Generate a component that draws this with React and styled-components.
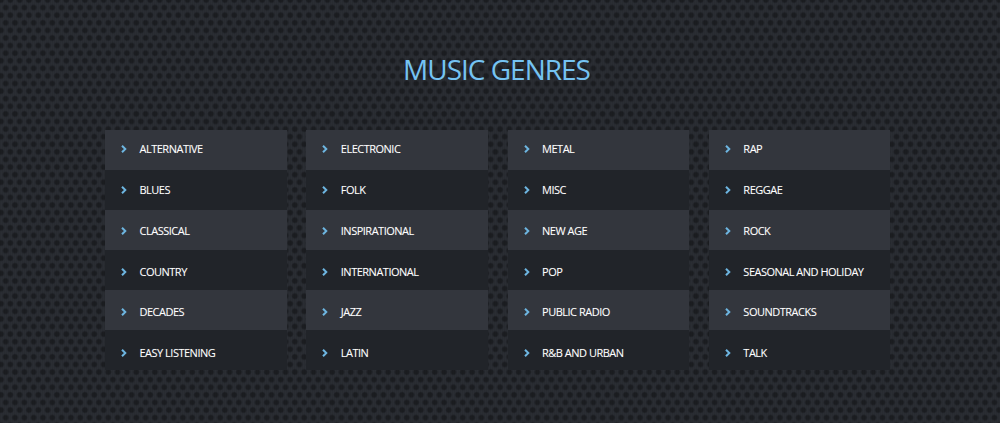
import React from 'react';
import styled, { createGlobalStyle } from 'styled-components';

const GlobalStyle = createGlobalStyle`
  html, body {
    margin: 0;
    padding: 0;
  }
  body {
    background-color: #24272d;
    font-family: "Open Sans", "Liberation Sans", sans-serif;
  }
`;

const Page = styled.div`
  box-sizing: border-box;
  width: 1000px;
  height: 423px;
  overflow: hidden;
  padding-top: 50px;
  background-color: #2a2d33;
  background-image:
    repeating-linear-gradient(90deg, rgba(0, 0, 0, 0.05) 0 1px, transparent 1px 2px),
    radial-gradient(circle at center, #1b1d21 0, #1b1d21 2px, transparent 3.6px),
    radial-gradient(circle at center, #1b1d21 0, #1b1d21 2px, transparent 3.6px);
  background-size: auto, 9.33px 15.2px, 9.33px 15.2px;
  background-position: 0 0, 1px 0, 5.67px 7.6px;
`;

const Title = styled.h1`
  margin: 0 0 41px;
  padding-right: 7px;
  text-align: center;
  font-size: 28px;
  line-height: 39px;
  font-weight: 400;
  letter-spacing: -1px;
  color: #75c3f2;
`;

const Columns = styled.div`
  display: grid;
  grid-template-columns: repeat(4, 181.6px);
  column-gap: 19.7px;
  margin-left: 105px;
`;

const List = styled.ul`
  list-style: none;
  margin: 0;
  padding: 0;
`;

/* the labels drift down a little from row to row, the backgrounds do not */
const Row = styled.li`
  box-sizing: border-box;
  display: flex;
  align-items: flex-start;
  height: 40px;
  padding-left: 16px;
  padding-top: ${(props) => 11 + props.$index * 0.85}px;
  background-color: ${(props) => (props.$index % 2 === 0 ? '#33363d' : '#212429')};
  color: #fff;
  font-size: 11px;
  line-height: 16px;
  letter-spacing: -0.5px;
  text-shadow: 0 0 1px rgba(255, 255, 255, 0.25);
`;

const Chevron = styled.svg`
  width: 6px;
  height: 8px;
  margin-top: 4px;
  margin-right: 12.5px;
  flex-shrink: 0;
  fill: none;
  stroke: #6db5e0;
  stroke-width: 2;
`;

const columns = [
  ['ALTERNATIVE', 'BLUES', 'CLASSICAL', 'COUNTRY', 'DECADES', 'EASY LISTENING'],
  ['ELECTRONIC', 'FOLK', 'INSPIRATIONAL', 'INTERNATIONAL', 'JAZZ', 'LATIN'],
  ['METAL', 'MISC', 'NEW AGE', 'POP', 'PUBLIC RADIO', 'R&B AND URBAN'],
  ['RAP', 'REGGAE', 'ROCK', 'SEASONAL AND HOLIDAY', 'SOUNDTRACKS', 'TALK'],
];

const App = () => {
  return (
    <Page>
      <GlobalStyle />
      <Title>MUSIC GENRES</Title>
      <Columns>
        {columns.map((genres) => (
          <List key={genres[0]}>
            {genres.map((genre, index) => (
              <Row key={genre} $index={index}>
                <Chevron viewBox="0 0 6 8">
                  <path d="M1 0.7 L4.3 4 L1 7.3" />
                </Chevron>
                {genre}
              </Row>
            ))}
          </List>
        ))}
      </Columns>
    </Page>
  );
};

export default App;
